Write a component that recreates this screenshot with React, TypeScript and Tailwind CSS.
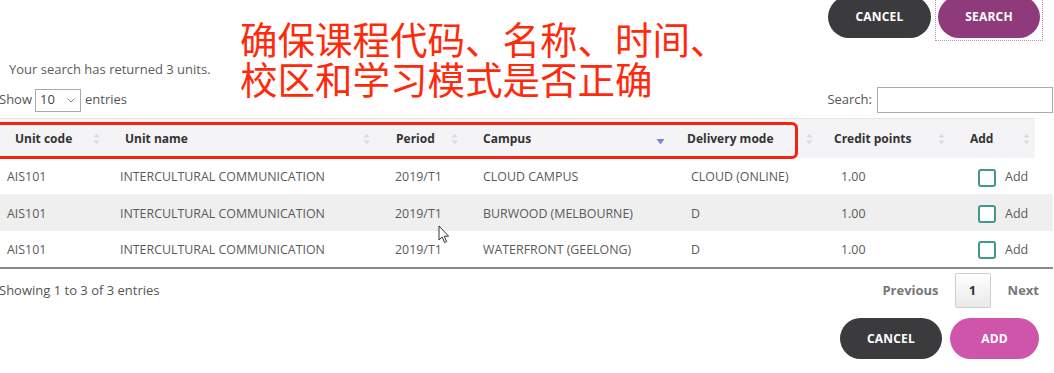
import React from "react";

const SortIcon = () => (
  <svg width="7" height="12" viewBox="0 0 7 12" className="shrink-0">
    <path d="M3.5 0.5 L6.5 4.5 L0.5 4.5 Z" fill="#dcdcdc" />
    <path d="M3.5 11.5 L6.5 7.5 L0.5 7.5 Z" fill="#dcdcdc" />
  </svg>
);

const SortDesc = () => (
  <svg width="9" height="12" viewBox="0 0 9 12" className="shrink-0 mt-[6px]">
    <path d="M0.5 3 L8.5 3 L4.5 8.5 Z" fill="#7f84d6" />
  </svg>
);

const cols = "grid-cols-[110px_275px_88px_204px_147px_136px_1fr]";

type Row = { code: string; name: string; period: string; campus: string; mode: string; cp: string };
const rows: Row[] = [
  { code: "AIS101", name: "INTERCULTURAL COMMUNICATION", period: "2019/T1", campus: "CLOUD CAMPUS", mode: "CLOUD (ONLINE)", cp: "1.00" },
  { code: "AIS101", name: "INTERCULTURAL COMMUNICATION", period: "2019/T1", campus: "BURWOOD (MELBOURNE)", mode: "D", cp: "1.00" },
  { code: "AIS101", name: "INTERCULTURAL COMMUNICATION", period: "2019/T1", campus: "WATERFRONT (GEELONG)", mode: "D", cp: "1.00" },
];

export default function App() {
  return (
    <div className="relative w-[1054px] h-[373px] overflow-hidden bg-white font-['Open_Sans','Noto_Sans',sans-serif] text-[#5a5a5a]">
      {/* top buttons */}
      <div className="flex items-center justify-end gap-[4px] pr-[11px] mt-[-7px]">
        <button className="w-[103px] h-[42px] rounded-full bg-[#3b3b3d] text-white text-[12px] font-bold tracking-[0.2px]">
          CANCEL
        </button>
        <div className="p-[2px] border border-dotted border-[#c98ab8]">
          <button className="block w-[102px] h-[42px] rounded-full bg-[#8f3b7b] text-white text-[12px] font-bold tracking-[0.2px]">
            SEARCH
          </button>
        </div>
      </div>

      <div className="mt-[19px] pl-[9px] text-[13px] leading-[18px] text-[#5c5c5c]">
        Your search has returned 3 units.
      </div>

      <div className="mt-[9px] flex items-center justify-between h-[26px]">
        <div className="flex items-center text-[13px] text-[#555]">
          <span className="ml-[-1px]">Show</span>
          <div className="ml-[3px] w-[46px] h-[23px] border border-[#aaaaaa] flex items-center justify-between pl-[4px] pr-[5px] text-[13px] text-[#444]">
            <span>10</span>
            <svg width="8" height="5" viewBox="0 0 8 5">
              <path d="M0.5 0.5 L4 4 L7.5 0.5" stroke="#888" strokeWidth="1" fill="none" />
            </svg>
          </div>
          <span className="ml-[4px]">entries</span>
        </div>
        <div className="flex items-center text-[13px] text-[#555] pr-[1px]">
          <span>Search:</span>
          <div className="ml-[5px] w-[176px] h-[26px] border border-[#aaaaaa]" />
        </div>
      </div>

      {/* table */}
      <div className="mt-[5px]">
        <div className={`grid ${cols} w-[1035px] h-[40px] bg-[#f4f4f6] border-t border-[#e6e6e6] text-[12px] font-bold text-[#333]`}>
          <div className="flex items-center justify-between pl-[15px] pr-[10px]"><span>Unit code</span><SortIcon /></div>
          <div className="flex items-center justify-between pl-[15px] pr-[15px]"><span>Unit name</span><SortIcon /></div>
          <div className="flex items-center justify-between pl-[11px] pr-[15px]"><span>Period</span><SortIcon /></div>
          <div className="flex items-center justify-between pl-[10px] pr-[12px]"><span>Campus</span><SortDesc /></div>
          <div className="flex items-center justify-between pl-[10px] pr-[11px]"><span>Delivery mode</span><SortIcon /></div>
          <div className="flex items-center justify-between pl-[10px] pr-[15px]"><span>Credit points</span><SortIcon /></div>
          <div className="flex items-center justify-between pl-[10px] pr-[5px]"><span>Add</span><SortIcon /></div>
        </div>
        <div className="w-[1053px] border-b-2 border-[#8a8a8a]">
          {rows.map((r, i) => (
            <div key={i} className={`grid ${cols} h-[36.4px] pt-[3px] items-center text-[12.4px] text-[#5a5a5a] ${i === 1 ? "bg-[#efefef]" : "bg-white"}`}>
              <div className="pl-[7px]">{r.code}</div>
              <div className="pl-[10px]">{r.name}</div>
              <div className="pl-[10px]">{r.period}</div>
              <div className="pl-[10px]">{r.campus}</div>
              <div className="pl-[14px]">{r.mode}</div>
              <div className="pl-[17px]">{r.cp}</div>
              <div className="pl-[18px] flex items-center">
                <span className="w-[18px] h-[18px] border-2 border-[#3f9a8b] rounded-[3px] bg-white" />
                <span className="ml-[9px] text-[12.5px]">Add</span>
              </div>
            </div>
          ))}
        </div>
      </div>

      {/* footer */}
      <div className="mt-[4px] flex items-center justify-between h-[35px]">
        <div className="ml-[-1px] text-[13px] text-[#555]">Showing 1 to 3 of 3 entries</div>
        <div className="flex items-center pr-[15px] text-[13px] font-bold text-[#777]">
          <span>Previous</span>
          <span className="ml-[16px] w-[36px] h-[35px] flex items-center justify-center border border-[#cfcfcf] rounded-[2px] bg-gradient-to-b from-white to-[#e9e9e9] text-[#333]">1</span>
          <span className="ml-[17px]">Next</span>
        </div>
      </div>

      <div className="mt-[10px] flex justify-end gap-[8px] pr-[15px]">
        <button className="w-[102px] h-[41px] rounded-full bg-[#3b3b3d] text-white text-[12px] font-bold tracking-[0.2px]">
          CANCEL
        </button>
        <button className="w-[89px] h-[41px] rounded-full bg-[#cf55aa] text-white text-[12px] font-bold tracking-[0.2px]">
          ADD
        </button>
      </div>

      {/* annotations */}
      <div className="absolute left-[240px] top-[18px] text-[37.5px] leading-[40px] text-[#ff2a0c] font-['Noto_Sans_CJK_SC',sans-serif] whitespace-nowrap">
        <div>确保课程代码、名称、时间、</div>
        <div>校区和学习模式是否正确</div>
      </div>
      <div className="absolute left-[-6px] top-[122px] w-[804px] h-[37px] border-[3px] border-[#f5230f] rounded-[6px]" />

      {/* mouse cursor */}
      <svg className="absolute left-[438px] top-[225px]" width="12" height="19" viewBox="0 0 12 19">
        <path d="M1 1 L1 15 L4.2 12 L6.6 17.5 L8.6 16.6 L6.3 11.2 L10.6 11.2 Z" fill="white" stroke="#333" strokeWidth="1" strokeLinejoin="round" />
      </svg>
    </div>
  );
}
